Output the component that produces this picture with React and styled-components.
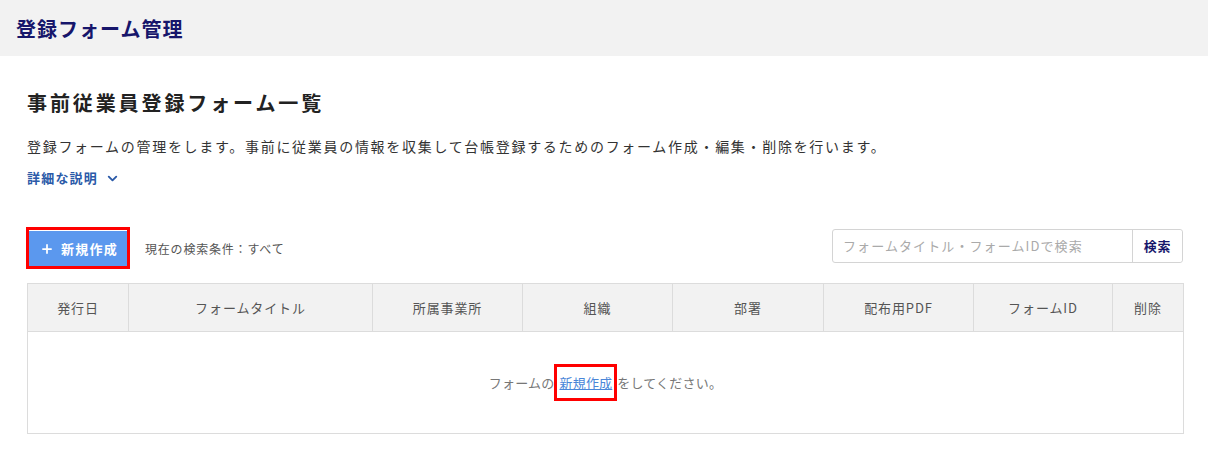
import React from 'react';
import styled, { createGlobalStyle } from 'styled-components';
import { ChevronDown, Plus } from 'lucide-react';

const GlobalStyle = createGlobalStyle`
    body {
        margin: 0;
        background: #fff;
        font-family: "Noto Sans CJK JP", "Noto Sans", sans-serif;
        color: #333;
    }
`

const Header = styled.header`
    height: 56px;
    margin-right: 2px;
    background: #f2f2f2;
    display: flex;
    align-items: center;
    padding-left: 16px;
`

const HeaderTitle = styled.h1`
    margin: 0;
    font-size: 20px;
    font-weight: 700;
    color: #17166b;
    letter-spacing: 1px;
`

const Main = styled.main`
    padding: 0 27px;
`

const PageTitle = styled.h2`
    margin: 33px 0 0;
    font-size: 20px;
    line-height: 28px;
    font-weight: 700;
    color: #222;
    letter-spacing: 2.9px;
`

const Description = styled.p`
    margin: 19px 0 0;
    font-size: 14px;
    line-height: 20px;
    color: #333;
    letter-spacing: 1.7px;
`

const DetailToggle = styled.button`
    margin-top: 12px;
    padding: 0;
    border: 0;
    background: none;
    display: flex;
    align-items: center;
    gap: 7px;
    font-family: inherit;
    font-size: 13px;
    line-height: 20px;
    font-weight: 700;
    color: #2b5aa8;
    letter-spacing: 1.2px;
    cursor: pointer;
`

const Toolbar = styled.div`
    margin-top: 39px;
    display: flex;
    align-items: center;
`

const Highlight = styled.span`
    display: inline-block;
    border: 3px solid #ff0000;
    padding: ${p => p.$pad || '0'};
    margin-left: ${p => p.$shift || '0'};
`

const CreateButton = styled.button`
    display: flex;
    align-items: center;
    justify-content: center;
    gap: 7px;
    width: 98px;
    height: 35px;
    padding: 0 0 0 2px;
    border: 0;
    background: #5b98ee;
    color: #fff;
    font-family: inherit;
    font-size: 13px;
    font-weight: 700;
    letter-spacing: 1.3px;
    cursor: pointer;
`

const Condition = styled.span`
    margin-left: 15px;
    font-size: 12px;
    color: #555;
    letter-spacing: 0.8px;
`

const Search = styled.div`
    margin-left: auto;
    display: flex;
    height: 32px;
    border: 1px solid #d4d4d4;
    border-radius: 3px;
    margin-top: -5px;
`

const SearchInput = styled.input`
    width: 289px;
    border: 0;
    border-right: 1px solid #d4d4d4;
    padding: 0 0 0 10px;
    font-family: inherit;
    font-size: 13px;
    letter-spacing: 1.1px;
    outline: none;
    background: transparent;

    &::placeholder {
        color: #aaa;
    }
`

const SearchButton = styled.button`
    width: 49px;
    border: 0;
    background: #fff;
    border-radius: 0 3px 3px 0;
    font-family: inherit;
    font-size: 13px;
    font-weight: 700;
    color: #17166b;
    letter-spacing: 0.8px;
    cursor: pointer;
`

const Table = styled.table`
    margin-top: 14px;
    width: 100%;
    border-collapse: collapse;
    table-layout: fixed;
`

const Th = styled.th`
    height: 47px;
    padding: 0;
    background: #f2f2f2;
    border: 1px solid #dcdcdc;
    font-size: 13px;
    font-weight: 400;
    color: #555;
    letter-spacing: 0.9px;
`

const EmptyCell = styled.td`
    height: 101px;
    padding: 0;
    border: 1px solid #dcdcdc;
    text-align: center;
    font-size: 13px;
    color: #777;
    letter-spacing: 0.2px;
`

const Link = styled.a`
    color: #4a86d8;
    text-decoration: underline;
    cursor: pointer;
`

const columns = [
    { label: '発行日', width: 101 },
    { label: 'フォームタイトル', width: 244 },
    { label: '所属事業所', width: 150 },
    { label: '組織', width: 150 },
    { label: '部署', width: 151 },
    { label: '配布用PDF', width: 150 },
    { label: 'フォームID', width: 139 },
    { label: '削除', width: 71 },
];

export default function App() {
    return (
        <>
            <GlobalStyle />
            <Header>
                <HeaderTitle>登録フォーム管理</HeaderTitle>
            </Header>
            <Main>
                <PageTitle>事前従業員登録フォーム一覧</PageTitle>
                <Description>
                    登録フォームの管理をします。事前に従業員の情報を収集して台帳登録するためのフォーム作成・編集・削除を行います。
                </Description>
                <DetailToggle>
                    詳細な説明
                    <ChevronDown size={15} strokeWidth={3} />
                </DetailToggle>

                <Toolbar>
                    <Highlight $pad="1px 0 0" $shift="-1px">
                        <CreateButton>
                            <Plus size={14} strokeWidth={3} />
                            新規作成
                        </CreateButton>
                    </Highlight>
                    <Condition>現在の検索条件：すべて</Condition>
                    <Search>
                        <SearchInput placeholder="フォームタイトル・フォームIDで検索" />
                        <SearchButton>検索</SearchButton>
                    </Search>
                </Toolbar>

                <Table>
                    <colgroup>
                        {columns.map(c => <col key={c.label} style={{ width: c.width }} />)}
                    </colgroup>
                    <thead>
                        <tr>
                            {columns.map(c => <Th key={c.label}>{c.label}</Th>)}
                        </tr>
                    </thead>
                    <tbody>
                        <tr>
                            <EmptyCell colSpan={columns.length}>
                                フォームの<Highlight $pad="6px 2px"><Link>新規作成</Link></Highlight>をしてください。
                            </EmptyCell>
                        </tr>
                    </tbody>
                </Table>
            </Main>
        </>
    );
}
